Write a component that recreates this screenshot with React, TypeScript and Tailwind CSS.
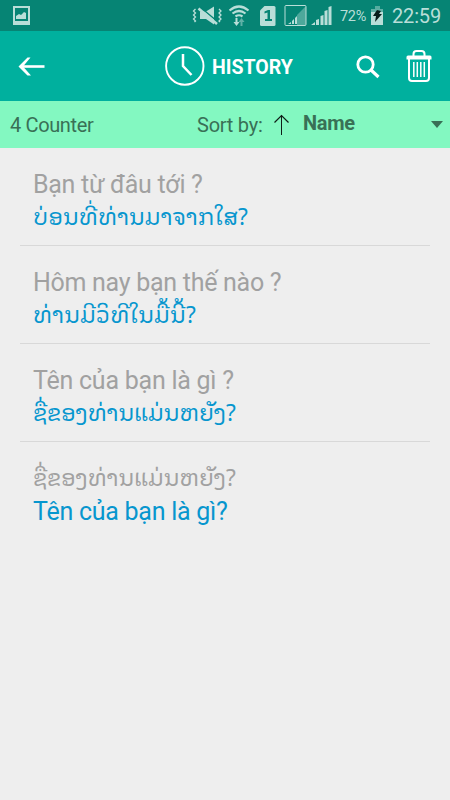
import React from 'react';

type Line = { text: string; lao?: boolean; track: string };
type Entry = { source: Line; result: Line };

const entries: Entry[] = [
  {
    source: { text: 'Bạn từ đâu tới ?', track: 'tracking-[-0.28px]' },
    result: { text: 'ບ່ອນທີ່ທ່ານມາຈາກໃສ?', lao: true, track: 'tracking-normal' },
  },
  {
    source: { text: 'Hôm nay bạn thế nào ?', track: 'tracking-[-0.28px]' },
    result: { text: 'ທ່ານມີວິທີໃນມື້ນີ້?', lao: true, track: 'tracking-[0.1px]' },
  },
  {
    source: { text: 'Tên của bạn là gì ?', track: 'tracking-[-0.24px]' },
    result: { text: 'ຊື່ຂອງທ່ານແມ່ນຫຍັງ?', lao: true, track: 'tracking-[-0.2px]' },
  },
  {
    source: { text: 'ຊື່ຂອງທ່ານແມ່ນຫຍັງ?', lao: true, track: 'tracking-[-0.2px]' },
    result: { text: 'Tên của bạn là gì?', track: 'tracking-[-0.26px]' },
  },
];

function StatusIcons() {
  return (
    <svg className="block h-[31px] w-[450px]" viewBox="0 0 450 31" fill="none">
      <g fill="#b9ded8">
        <path fillRule="evenodd" d="M13 6h17v19H13zM15 8v13h13V8z" />
        <path d="M16 19v-3l3-2 2 1 3-3 2 1v6z" />
        <path d="M200 11.500h6l8-5v18l-8-5.500h-6z" />
        <path d="M199.500 6.500l18.500 15.500" stroke="#068474" strokeWidth="1.500" />
        <path d="M198.500 8.500l18.500 15.500" stroke="#b9ded8" strokeWidth="2.600" />
        <path d="M195.500 9l-2 2 2 2-2 2 2 2-2 2 2 2-1 1M219 9l2 2-2 2 2 2-2 2 2 2-2 2 1 1" fill="none" stroke="#b9ded8" strokeWidth="1.300" />
        <path d="M229.500 10.500q9.500-8 19 0M232.500 13.500q6.500-5 13 0M235.500 16.500q3.500-2.500 7 0" fill="none" stroke="#b9ded8" strokeWidth="2.200" />
        <path d="M235.500 18h2v4h2l-3 4-3-4h2z" />
        <path opacity=".5" d="M240.500 26h2v-4h2l-3-4-3 4h2z" />
        <path d="M264.500 6h9.500q1.500 0 1.500 1.500v17q0 1.500-1.500 1.500h-12.500q-1.500 0-1.500-1.500V10.500z" />
        <path d="M264.500 11.500l3.500-1.500h2v9h2v2h-7v-2h2.500v-6.500l-3 1z" fill="#068474" />
        <rect x="285" y="5.500" width="21" height="20" rx="1" fill="none" stroke="#b9ded8" />
        <path opacity=".4" d="M297 15l9-9v19h-9z" />
        <path d="M288 24l3-2v2zM292 21l2-2v5h-2zM295 18l2-2v8h-2z" />
        <path d="M311 25l4-3v3zM316 20l3-1v6h-3zM320.500 16l3-1v10h-3zM324.500 11l3-1v15h-3zM328.500 7l3-1v19h-3z" />
        <path d="M371 9h12v16h-12z" />
        <path d="M375 6h5v3h-5z" opacity=".45" />
        <path d="M371 9h12v3h-12z" fill="#5fb1a6" />
      </g>
      <path d="M377 10l4 1-2 3h3l-7 8 1-6h-3z" fill="#071d1a" />
    </svg>
  );
}

function StatusBar() {
  return (
    <header className="relative h-[31px] bg-[#068474] text-[#b9ded8]">
      <StatusIcons />
      <span className="absolute left-[340px] top-[8px] text-[14.500px] leading-[18px] tracking-[-0.300px]">72%</span>
      <span className="absolute left-[392px] top-[4px] text-[20px] leading-[24px] tracking-[-0.15px]">22:59</span>
    </header>
  );
}

function TitleBar() {
  return (
    <nav className="flex h-[70px] items-center bg-[#00b09e] text-white">
      <svg className="ml-[18px] h-[20px] w-[28px]" viewBox="0 0 28 20" fill="none" stroke="currentColor">
        <path d="M2 10.500H26.500" strokeWidth="2.600" />
        <path d="M12.500 1.500h-3L0.500 10.500l9 9h3.500L5 10.500z" fill="currentColor" stroke="none" />
      </svg>
      <svg className="ml-[118px] h-[42px] w-[42px]" viewBox="0 0 42 42" fill="none" stroke="currentColor">
        <circle cx="20.800" cy="21" r="18.700" strokeWidth="1.900" />
        <path d="M19 9v12l8.500 9" strokeWidth="2.500" />
      </svg>
      <h1 className="ml-[6px] w-[83px] whitespace-nowrap pt-[4px] text-[19.500px] font-bold">HISTORY</h1>
      <svg className="ml-[61px] mt-[2px] h-[24px] w-[25px]" viewBox="0 0 25 24" fill="none" stroke="currentColor">
        <circle cx="9.500" cy="9.500" r="7.700" strokeWidth="2.800" />
        <path d="M15 15l7.500 7" strokeWidth="3.200" />
      </svg>
      <svg className="ml-[24px] h-[34px] w-[28px]" viewBox="0 0 28 34" fill="none" stroke="currentColor">
        <path d="M8.500 7V5q0-3 3-3h5q3 0 3 3v2" strokeWidth="2" />
        <path d="M1.500 10.500V8q0-1.500 1.500-1.500h22q1.500 0 1.500 1.500v2.500z" fill="currentColor" stroke="none" />
        <path d="M4 10v19q0 3 3 3h14q3 0 3-3V10" strokeWidth="2" />
        <path d="M8.800 13v15M12.300 13v15M15.800 13v15M19.300 13v15" strokeWidth="1.500" />
      </svg>
    </nav>
  );
}

function SortBar() {
  return (
    <section className="flex h-[47px] items-center bg-[#83f8c1] text-[20px] text-[#397056]">
      <span className="ml-[10px] w-[187px] tracking-[-0.36px]">4 Counter</span>
      <span className="w-[68px] whitespace-nowrap tracking-[-0.25px]">Sort by:</span>
      <svg className="ml-[9px] h-[22px] w-[16px]" viewBox="0 0 16 22" fill="none" stroke="#101e18">
        <path d="M7.500 1v20" strokeWidth="1" />
        <path d="M0.500 8.500l7-7 7 7" strokeWidth="1.200" />
      </svg>
      <strong className="ml-[13px] w-[128px] pb-[3px] font-bold tracking-[-0.3px]">Name</strong>
      <svg className="h-[7px] w-[12px]" viewBox="0 0 12 7" fill="currentColor">
        <path d="M0 0h12L6 7z" />
      </svg>
    </section>
  );
}

function Phrase({ line, color }: { line: Line; color: string }) {
  return (
    <p className={`h-[33px] whitespace-nowrap ${color} ${line.track} ${line.lao ? "font-['Noto_Sans_Lao_Looped','Noto_Sans_Lao','DejaVu_Sans',sans-serif] text-[22.700px] leading-[29px]" : 'text-[25px] leading-[33px]'}`}>
      {line.text}
    </p>
  );
}

export default function App() {
  return (
    <div className="h-[800px] w-[450px] overflow-hidden bg-[#eeeeee] font-['Roboto','Noto_Sans_Lao','DejaVu_Sans',sans-serif]">
      <StatusBar />
      <TitleBar />
      <SortBar />
      <ul className="px-5">
        {entries.map((entry, i) => (
          <li key={i} className={`h-[98px] px-[13px] pt-[20px] ${i < 3 ? 'border-b border-[#d8d8d8]' : ''}`}>
            <Phrase line={entry.source} color="text-[#a1a1a1]" />
            <Phrase line={entry.result} color="text-[#0796ce]" />
          </li>
        ))}
      </ul>
    </div>
  );
}
